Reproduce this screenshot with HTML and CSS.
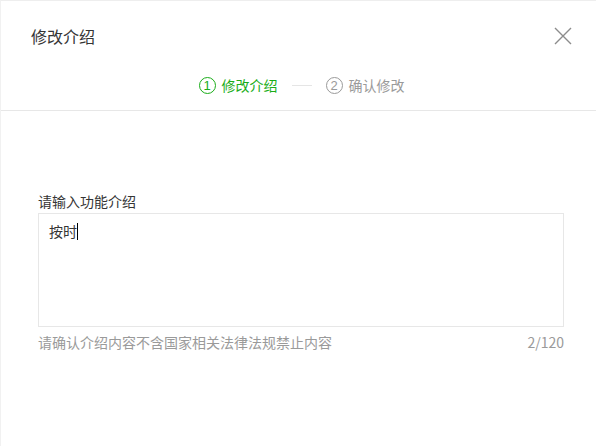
FILE: index.html
```html
<!DOCTYPE html>
<html lang="zh-CN">
<head>
<meta charset="utf-8">
<title>修改介绍</title>
<link rel="stylesheet" href="styles.css">
</head>
<body>
<div class="dialog">
  <div class="head">
    <div class="title-row">
      <h2 class="title">修改介绍</h2>
      <button class="close" aria-label="关闭">
        <svg width="18" height="18" viewBox="0 0 18 18"><path d="M1 1L17 17M17 1L1 17" stroke="#8c8c8c" stroke-width="1.4" fill="none"/></svg>
      </button>
    </div>
    <div class="steps">
      <div class="step active"><span class="num">1</span><span class="label">修改介绍</span></div>
      <span class="sep"></span>
      <div class="step"><span class="num">2</span><span class="label">确认修改</span></div>
    </div>
  </div>
  <div class="body">
    <div class="field-label">请输入功能介绍</div>
    <div class="textarea"><span class="value">按时</span><span class="caret"></span></div>
    <div class="hint-row">
      <span class="hint">请确认介绍内容不含国家相关法律法规禁止内容</span>
      <span class="count">2/120</span>
    </div>
  </div>
</div>
</body>
</html>
```

FILE: styles.css
```css
* { box-sizing: border-box; }
html, body {
  margin: 0;
  padding: 0;
  background: #fff;
}
body {
  font-family: "Noto Sans CJK SC", "Liberation Sans", sans-serif;
  color: #353535;
}
.dialog {
  width: 596px;
  height: 446px;
  border-top: 1px solid #eeeeee;
  border-left: 1px solid #f1f1f1;
  background: #fff;
}
.head {
  border-bottom: 1px solid #e7e7e7;
  padding-bottom: 13px;
}
.title-row {
  display: flex;
  align-items: center;
  justify-content: space-between;
  padding: 23px 24px 0 30px;
  height: 47px;
}
.title {
  margin: 0;
  font-size: 16px;
  font-weight: normal;
  line-height: 24px;
  color: #353535;
}
.close {
  border: 0;
  background: none;
  padding: 0;
  width: 18px;
  height: 18px;
  display: flex;
  cursor: pointer;
}
.steps {
  display: flex;
  align-items: center;
  justify-content: center;
  height: 24px;
  margin-top: 25px;
  padding-left: 6px;
}
.step {
  display: flex;
  align-items: center;
  gap: 6px;
  color: #9a9a9a;
  font-size: 14px;
  line-height: 20px;
}
.step .num {
  width: 17px;
  height: 17px;
  border: 1px solid currentColor;
  border-radius: 50%;
  display: flex;
  align-items: center;
  justify-content: center;
  font-family: "Liberation Sans", sans-serif;
  font-size: 13px;
  line-height: 1;
}
.step.active { color: #1aad19; }
.sep {
  width: 20px;
  height: 1px;
  background: #e5e5e5;
  margin: 0 14px;
}
.body {
  padding: 80px 32px 0 37px;
}
.field-label {
  font-size: 14px;
  line-height: 20px;
  color: #353535;
}
.textarea {
  margin-top: 2px;
  height: 114px;
  border: 1px solid #e7e7e7;
  padding: 7px 10px;
  font-size: 14px;
  line-height: 20px;
  color: #353535;
  display: flex;
  align-items: flex-start;
}
.caret {
  display: inline-block;
  width: 1px;
  height: 17px;
  background: #000;
  margin-top: 2px;
}
.hint-row {
  display: flex;
  justify-content: space-between;
  margin-top: 5px;
  font-size: 14px;
  line-height: 20px;
  color: #9a9a9a;
}
```
